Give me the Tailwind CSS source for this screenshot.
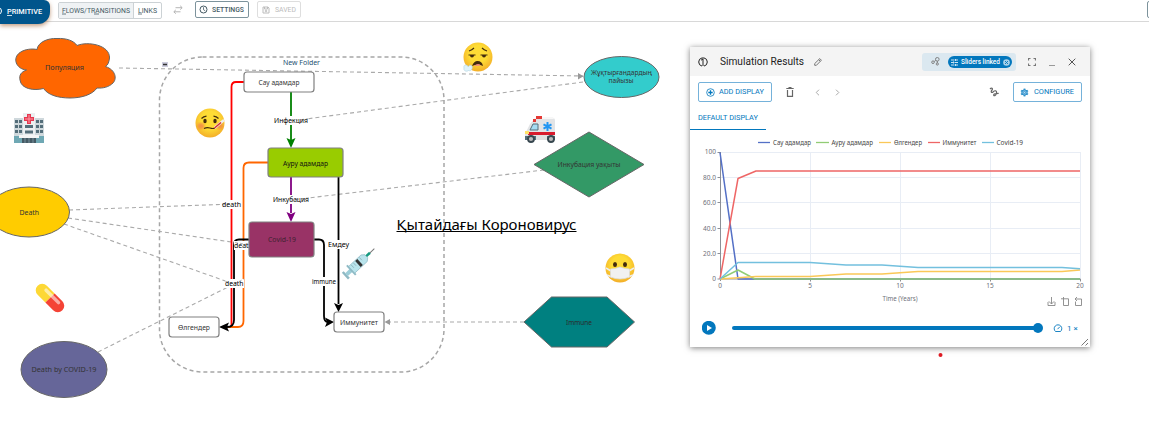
<!DOCTYPE html>
<html lang="kk">
<head>
<meta charset="utf-8">
<title>Simulation</title>
<script src="https://cdn.jsdelivr.net/npm/@tailwindcss/browser@4"></script>
</head>
<body class="bg-white">
<div class="relative flex h-[432px] w-[1149px] flex-col overflow-hidden bg-white font-['Roboto',sans-serif]">

<!-- Top toolbar -->
<header class="flex h-[22px] shrink-0 items-start border-b border-[#d8d8d8] bg-white text-[8px] leading-none">
  <button class="relative z-10 flex h-6 w-[50px] shrink-0 items-center rounded-br-[12px] rounded-tr-[6px] bg-[#00558c] pb-[3px] text-white shadow-[0_2px_4px_rgba(150,80,30,0.55)]">
    <svg class="-ml-1 mr-[5px] h-[9px] w-[7px] shrink-0" viewBox="0 0 7 9" fill="none" stroke="#fff" stroke-width="1"><circle cx="2.200" cy="5" r="3.300"/></svg>
    <svg class="h-3 w-9 shrink-0 overflow-visible"><text x="-1" y="9" font-size="7.800" font-weight="500" fill="#fff" textLength="35" lengthAdjust="spacingAndGlyphs">PRIMITIVE</text><path d="M-1 10.500H4" stroke="#fff" stroke-width=".8"/></svg>
  </button>
  <div class="ml-2 mt-[2px] flex h-[17px] shrink-0 overflow-hidden rounded-[2px] border border-[#ccd2d5]">
    <span class="flex w-[75px] items-start justify-center border-r border-[#ccd2d5] bg-[#eff2f4]"><svg class="h-4 w-[68px] overflow-visible"><text x="0" y="9.500" font-size="7.800" fill="#455a64" textLength="68" lengthAdjust="spacingAndGlyphs">FLOWS/TRANSITIONS</text><path d="M0 11H4M32 11H37" stroke="#455a64" stroke-width=".8"/></svg></span>
    <span class="flex w-[27px] items-start justify-center"><svg class="h-4 w-[19px] overflow-visible"><text x="0" y="9.500" font-size="7.800" fill="#455a64" textLength="19" lengthAdjust="spacingAndGlyphs">LINKS</text><path d="M0 11H4" stroke="#455a64" stroke-width=".8"/></svg></span>
  </div>
  <svg class="ml-[11px] mt-[5px] h-[10px] w-[10px] shrink-0" viewBox="0 0 10 10" fill="none" stroke="#b5b5b5" stroke-width="1"><path d="M2.500 2.700H9M7.200 .8L9.200 2.700 7.200 4.600M7.500 6.800H1M2.800 4.900L.8 6.800 2.800 8.700"/></svg>
  <button class="ml-[12px] mt-px flex h-[17px] w-[54px] shrink-0 items-start rounded-[2px] border border-[#7d939c] pl-[3px]">
    <svg class="mt-[3px] h-[9px] w-[9px]" viewBox="0 0 9 9" fill="none" stroke="#455a64"><circle cx="4.500" cy="4.500" r="3.500"/><path d="M4.500 2.200V4.700L6.200 5.800" stroke-width=".8"/></svg>
    <svg class="ml-[4px] h-4 w-8 overflow-visible"><text x="0" y="9.700" font-size="7.800" font-weight="500" fill="#455a64" textLength="32" lengthAdjust="spacingAndGlyphs">SETTINGS</text></svg>
  </button>
  <button class="ml-2 mt-px flex h-[17px] w-[44px] shrink-0 items-start rounded-[2px] border border-[#dedede] pl-[4px]">
    <svg class="mt-[4px] h-[8px] w-[8px]" viewBox="0 0 8 8" fill="none" stroke="#bcbcbc"><path d="M1 1H6L7 2V7H1ZM2.500 1V3H5.500V1"/><circle cx="4" cy="5" r=".8"/></svg>
    <svg class="ml-[4px] h-4 w-5 overflow-visible"><text x="1" y="9.500" font-size="7.800" fill="#bcbcbc" textLength="21" lengthAdjust="spacingAndGlyphs">SAVED</text></svg>
  </button>
  <button class="ml-auto mr-[-8px] mt-px h-[17px] w-[10px] shrink-0 rounded-[2px] border border-[#7d939c]"></button>
</header>

<!-- Model canvas -->
<svg class="absolute left-0 top-0 h-[432px] w-[1149px]" viewBox="0 0 1149 432" font-family="'Noto Sans',sans-serif" font-size="7" fill="none">
  <defs>
    <radialGradient id="face" cx=".5" cy=".4" r=".6"><stop offset=".5" stop-color="#fedc35"/><stop offset="1" stop-color="#f3ae29"/></radialGradient>
    <filter id="blush"><feGaussianBlur stdDeviation=".8"/></filter>
  </defs>
  <rect x="159.500" y="57" width="284.500" height="315" rx="43" stroke="#a6a6a6" stroke-width="1.500" stroke-dasharray="4 3"/>
  <g stroke="#aaa" stroke-width="1.100" stroke-dasharray="4 3">
    <path d="M119 68L583 76M583 82L291 121M544 170L291 200M69 210L232 204M68 218L245 244M64 224L234 284M98 352L234 284M524 322H386"/>
  </g>
  <path d="M578 73L583.500 76.200 578 79.500ZM390 319L384.500 322 390 325Z" fill="#999"/>
  <rect x="162" y="62" width="6" height="5" fill="#ccd"/><path d="M163 64.500H167" stroke="#333" stroke-width="1.500"/>

  <g stroke="#666" stroke-width="1">
    <path d="M37 49.500C38 42 48 38 57 38.500C67 38 74 41 77 45.500C88 41 110 45 109.500 58C109 62 108 65 105.500 66.500C116 70 117 79 113 83C109 87 103 88.500 97 88C92 95 81 98 70 98C58 98 48 95 43.500 88.500C34 91 21 89 20 80C19 75 21 72 26.500 70C16 69 12 58 20 52.500C25 49 32 48.500 37 49.500Z" fill="#ff6600"/>
    <ellipse cx="29" cy="212" rx="40.500" ry="25" fill="#ffcc00"/>
    <ellipse cx="64" cy="369.500" rx="43" ry="28" fill="#666699"/>
    <ellipse cx="621.500" cy="77" rx="37.500" ry="20.500" fill="#33cccc"/>
    <path d="M534 164.500L589 132 644 164.500 589 197Z" fill="#339966"/>
    <path d="M524 322L551.500 297H607L634.500 322 607 347H551.500Z" fill="#008080"/>
  </g>

  <g stroke-width="1.800">
    <path d="M244 82H236Q231.500 82 231.500 87V326" stroke="#f00"/>
    <path d="M268 162.500H249Q243.500 162.500 243.500 168V321Q243.500 327 238 327H228" stroke="#ff6600"/>
    <path d="M291 92V140" stroke="#008000"/><path d="M291 177V213" stroke="#800080"/>
    <path d="M338.500 177V304" stroke="#000"/>
    <path d="M249 239.500H239Q234 239.500 234 245V320Q234 327 227 327M314 239.500H319Q324 239.500 324 245V316Q324 322 328 322" stroke="#000"/>
  </g>
  <path d="M286.500 138L291 140 295.500 138 291 148Z" fill="#008000"/>
  <path d="M286.500 212L291 214 295.500 212 291 222Z" fill="#800080"/>
  <path d="M334 303L338.500 305 343 303 338.500 312Z" fill="#000"/>
  <path d="M229 322.500L227 327 229 331.500 219 327ZM325 317.500L327 322 325 327 334 322Z" fill="#000"/>

  <g stroke="#808080" stroke-width="1.200">
    <rect x="244" y="72" width="70" height="20" rx="3" fill="#fff"/>
    <rect x="268" y="148" width="75" height="29" rx="3" fill="#99cc00"/>
    <rect x="249" y="222" width="65" height="35" rx="3" fill="#993366"/>
    <rect x="169" y="317" width="50" height="20" rx="3" fill="#fff"/>
    <rect x="334" y="312" width="50" height="20" rx="3" fill="#fff"/>
  </g>
  <path d="M274 116H308V125H274ZM273 195H309V204H273ZM222 200H241V209H222ZM234 241H248V250H234ZM225 279H244V288H225ZM328 240H349V249H328ZM312 277H336V286H312Z" fill="#fff"/>
  <g stroke="#bbb" stroke-dasharray="3 2"><path d="M291 121L308 118.700M291 200L309 197.800M222 204.400L232 204M235 242.500L247 244.400M225 281L234 284 244 279"/></g>
  <g fill="#333">
    <text x="45" y="70" textLength="39" lengthAdjust="spacingAndGlyphs">Популяция</text>
    <text x="283" y="65" fill="#234f70" textLength="37" lengthAdjust="spacingAndGlyphs">New Folder</text>
    <text x="258.500" y="85" textLength="41" lengthAdjust="spacingAndGlyphs">Сау адамдар</text>
    <text x="283" y="165.500" fill="#111" textLength="45" lengthAdjust="spacingAndGlyphs">Ауру адамдар</text>
    <text x="268" y="242" fill="#3d2130" textLength="28" lengthAdjust="spacingAndGlyphs">Covid-19</text>
    <text x="178" y="330" textLength="32" lengthAdjust="spacingAndGlyphs">Өлгендер</text>
    <text x="340" y="325" textLength="38" lengthAdjust="spacingAndGlyphs">Иммунитет</text>
    <text x="19.500" y="215" textLength="19.500" lengthAdjust="spacingAndGlyphs">Death</text>
    <text x="31.500" y="372" textLength="65" lengthAdjust="spacingAndGlyphs">Death by COVID-19</text>
    <text x="591" y="75" textLength="61" lengthAdjust="spacingAndGlyphs">Жұқтырғандардың</text>
    <text x="608.500" y="83" textLength="25" lengthAdjust="spacingAndGlyphs">пайызы</text>
    <text x="557.500" y="167" textLength="63" lengthAdjust="spacingAndGlyphs">Инкубация уақыты</text>
    <text x="566" y="325" fill="#2a2a2a" textLength="26" lengthAdjust="spacingAndGlyphs">Immune</text>
  </g>
  <g fill="#000">
    <text x="274" y="123" textLength="34" lengthAdjust="spacingAndGlyphs">Инфекция</text>
    <text x="273" y="202" textLength="36" lengthAdjust="spacingAndGlyphs">Инкубация</text>
    <text x="222" y="207" textLength="19" lengthAdjust="spacingAndGlyphs">death</text>
    <text x="234" y="248" textLength="14.500" lengthAdjust="spacingAndGlyphs">deat</text>
    <text x="225" y="286" textLength="18.500" lengthAdjust="spacingAndGlyphs">death</text>
    <text x="328" y="247" textLength="21" lengthAdjust="spacingAndGlyphs">Емдеу</text>
    <text x="312" y="284" textLength="24" lengthAdjust="spacingAndGlyphs">immune</text>
    <text x="396.500" y="230" font-size="14.500" textLength="180" lengthAdjust="spacingAndGlyphs">Қытайдағы Короновирус</text>
    <path d="M396.500 231.500H576.500" stroke="#000"/>
  </g>

  <!-- Hospital -->
  <g transform="translate(14 113)">
    <path d="M0 5H30V30H0Z" fill="#cfd8dc"/><path d="M0 23H30V30H0Z" fill="#6fa8b4"/><path d="M9 0H21V24H9Z" fill="#eceff1"/>
    <path d="M1 7H4V10H1ZM5 7H8V10H5ZM22 7H25V10H22ZM26 7H29V10H26ZM1 12H4V15H1ZM5 12H8V15H5ZM22 12H25V15H22ZM26 12H29V15H26ZM1 17H4V20H1ZM5 17H8V20H5ZM22 17H25V20H22ZM26 17H29V20H26ZM11 12H19V15H11ZM11 17.500H19V20.500H11Z" fill="#546e7a"/>
    <path d="M5 22H25V25H5Z" fill="#f5f5f5"/><path d="M8 25H22V30H8Z" fill="#455a64"/><path d="M11 25V30M15 25V30M19 25V30" stroke="#78909c"/>
    <path d="M13 1H17V4H20V8H17V11H13V8H10V4H13Z" fill="#e53950"/><path d="M15 2V10M11 6H19" stroke="#ff9aa5"/>
  </g>
  <!-- Pill -->
  <g transform="translate(50 298) rotate(45)"><path d="M0 -6.500H-11A6.500 6.500 0 0 0 -11 6.500H0Z" fill="#fdd835"/><path d="M0 -6.500H11A6.500 6.500 0 0 1 11 6.500H0Z" fill="#f44336"/><rect x="-10" y="-4.500" width="21" height="3.500" rx="1.700" fill="#fff" opacity=".55"/></g>
  <!-- Feverish face -->
  <g transform="translate(210 123)">
    <circle r="14.500" fill="url(#face)"/><ellipse cx="-9" cy="3" rx="3.500" ry="3" fill="#f07a4b" opacity=".7" filter="url(#blush)"/><ellipse cx="10" cy="3" rx="3" ry="3" fill="#f07a4b" opacity=".7" filter="url(#blush)"/>
    <ellipse cx="-5" cy="-2" rx="1.700" ry="2.300" fill="#422b0d"/><ellipse cx="5" cy="-2" rx="1.700" ry="2.300" fill="#422b0d"/>
    <path d="M-8.500 -4.500Q-6.500 -6.500 -3.500 -6.800M3.500 -6.800Q6.500 -6.500 8.500 -4.500M-6 5.500Q-3 4 0 5T5 5" stroke="#422b0d" stroke-width="1.200"/>
    <path d="M4.500 5L14 -3" stroke="#eee" stroke-width="2.500"/><path d="M4.500 5L11 -.5" stroke="#d32f2f" stroke-width="1.500"/>
  </g>
  <!-- Exhaling face -->
  <g transform="translate(478 57)">
    <circle r="14.500" fill="url(#face)"/><path d="M-9 -6Q-6 -7 -4 -9M4 -9Q6 -7 9 -6" stroke="#422b0d" stroke-width="1.200"/>
    <path d="M-9.500 -2H-2.500M2.500 -2H9.500" stroke="#422b0d" stroke-width="1.200"/><path d="M-8 -2A2 2.500 0 0 0 -4 -2ZM4 -2A2 2.500 0 0 0 8 -2Z" fill="#422b0d"/>
    <path d="M-6 9Q-4 4 -.5 4Q4 4 5 9Q0 6.500 -6 9Z" fill="#422b0d"/><path d="M-4 9Q0 5.500 3 8.500Z" fill="#ef8a80"/>
    <path d="M-6 9C-8 7 -10 9 -9.500 10C-11 7 -15 7.500 -14 11C-15 14 -11 15 -9.500 13.500C-7 14.500 -5 12 -6 9Z" fill="#e0f3fa" stroke="#acd3e1" stroke-width=".6"/>
  </g>
  <!-- Masked face -->
  <g transform="translate(620 268)">
    <circle r="14.500" fill="url(#face)"/><ellipse cx="-5" cy="-3.500" rx="2" ry="2.500" fill="#422b0d"/><ellipse cx="5" cy="-3.500" rx="2" ry="2.500" fill="#422b0d"/>
    <path d="M-14 0L-9 3M14 0L9 3M-13 7L-8 9M13 7L8 9" stroke="#eee" stroke-width="1.500"/><path d="M-9.500 1Q-5 1 0 -1Q5 1 9.500 1V9Q5 11 0 11Q-5 11 -9.500 9Z" fill="#f1f1f1" stroke="#dadada" stroke-width=".7"/>
  </g>
  <!-- Ambulance -->
  <g transform="translate(524 116)">
    <path d="M1 18L6 8 11 2H29Q31 2 31 5V23H1Z" fill="#e2e4e6"/><path d="M9 4L12 1H29L30 3H11Z" fill="#f7f7f7"/>
    <path d="M12 0H18V3H12ZM9 3H12V6H9Z" fill="#e53935"/><path d="M6 14L9 8H14V14Z" fill="#a5dcf2" stroke="#546e7a"/>
    <path d="M4 16H31V19H4Z" fill="#d81b2c"/><path d="M1 20H31V24H1Z" fill="#546e7a"/><path d="M12 19H23V24H12Z" fill="#e0e0e0"/><path d="M1 15H5V18H1Z" fill="#ffe36a"/>
    <path d="M23.500 6V15M19.500 8.300L27.500 12.700M27.500 8.300L19.500 12.700" stroke="#2196f3" stroke-width="2"/>
    <circle cx="7" cy="23" r="3" fill="#bbb" stroke="#37474f" stroke-width="1.800"/><circle cx="27" cy="23" r="3" fill="#bbb" stroke="#37474f" stroke-width="1.800"/>
  </g>
  <!-- Syringe -->
  <g transform="translate(359 263) rotate(-43)">
    <path d="M-18 -4.500V4.500" stroke="#8fb9c4" stroke-width="2.500"/><path d="M-17 0H-10" stroke="#9ccdd8" stroke-width="4"/><path d="M-10.500 -6.500V6.500" stroke="#8fbac5" stroke-width="2"/>
    <path d="M-10 -4.500H7L10 -2V2L7 4.500H-10Z" fill="#b9e4ec" stroke="#8bb8c4" stroke-width=".7"/><path d="M0 -4V4" stroke="#333" stroke-width="3"/><path d="M-7 -4V0M-4 -4V0M4 -4V0" stroke="#83a7b0" stroke-width=".7"/>
    <path d="M10 0H15" stroke="#159a80" stroke-width="2.500"/><path d="M15 0H21" stroke="#777"/>
  </g>
  <circle cx="940.500" cy="355" r="2" fill="#e01b24"/>
</svg>

<!-- Floating results window -->
<section class="absolute left-[690px] top-[47px] flex h-[300px] w-[400px] flex-col bg-white shadow-[0_1px_6px_rgba(0,0,0,0.5)]">
  <div class="flex h-[29px] shrink-0 items-center bg-[#f4f4f4] pl-[8px]">
    <svg class="h-[10px] w-[10px]" viewBox="0 0 10 10" fill="none" stroke="#222" stroke-width="1"><path d="M4 .9A4.200 4.200 0 0 0 4 9.100M6 .9A4.200 4.200 0 0 1 6 9.100M3 3.200L5 2V9M4 1H6"/></svg>
    <svg class="ml-3 h-4 w-[84px] overflow-visible"><text x="0" y="11" font-size="10" fill="#222" textLength="84" lengthAdjust="spacingAndGlyphs">Simulation Results</text></svg>
    <svg class="ml-[10px] h-2 w-2" viewBox="0 0 8 8" fill="none" stroke="#777"><path d="M.7 7.300V5.600L5.800 .6 7.400 2.200 2.400 7.300ZM4.700 1.700L6.300 3.300"/></svg>
    <div class="ml-[100px] flex h-[18px] w-[94px] items-center rounded-[3px] bg-[#dbe8f0] pl-[9px]">
      <svg class="h-[9px] w-[9px]" viewBox="0 0 9 9" fill="none" stroke="#777" stroke-width=".9"><circle cx="2" cy="5.200" r="1.300"/><circle cx="6.300" cy="2.300" r="1.800"/><circle cx="6.300" cy="7" r="1.100"/><path d="M3.200 4.500L4.800 3.400M6.300 4V6"/></svg>
      <div class="ml-[8px] mt-px flex h-3 w-16 items-center rounded-full bg-[#0277bd] pl-[3px]">
        <svg class="h-[7px] w-[7px]" viewBox="0 0 7 7" stroke="#fff" stroke-width=".8"><path d="M0 1H3.500M5 1H7M4.500 0V2M0 3.500H2M3.500 3.500H7M2.500 2.500V4.500M0 6H3.500M5 6H7M4.500 5V7"/></svg>
        <svg class="ml-[3px] h-3 w-10 shrink-0 overflow-visible"><text x="0" y="8" font-size="7" font-weight="500" fill="#fff" textLength="39" lengthAdjust="spacingAndGlyphs">Sliders linked</text></svg>
        <svg class="ml-[2px] h-[7px] w-[7px] shrink-0" viewBox="0 0 7 7"><circle cx="3.500" cy="3.500" r="3.300" fill="#a9d1e9"/><path d="M2 2L5 5M5 2L2 5" stroke="#0277bd" stroke-width=".9"/></svg>
      </div>
    </div>
    <svg class="ml-[12px] h-2 w-2" viewBox="0 0 8 8" fill="none" stroke="#777" stroke-width="1.200"><path d="M.5 2.500V.5H2.500M5.500 .5H7.500V2.500M7.500 5.500V7.500H5.500M2.500 7.500H.5V5.500"/></svg>
    <span class="ml-[13px] mt-2 h-[1.5px] w-[6px] bg-[#999]"></span>
    <svg class="ml-[13px] h-[8px] w-[8px]" viewBox="0 0 8 8" stroke="#555"><path d="M.7 .7L7.300 7.300M7.300 .7L.7 7.300"/></svg>
  </div>
  <div class="flex h-8 shrink-0 items-center px-2">
    <button class="flex h-5 w-[74px] items-center rounded-[2px] border border-[#75b2da] pl-[7px]">
      <svg class="h-[9px] w-[9px]" viewBox="0 0 9 9" fill="none" stroke="#0277bd"><circle cx="4.500" cy="4.500" r="3.800" stroke-width=".8"/><path d="M4.500 2.300V6.700M2.300 4.500H6.700" stroke-width="1.300"/></svg>
      <svg class="ml-1 h-3 w-[45px] overflow-visible"><text x="0" y="8.200" font-size="7" fill="#0277bd" textLength="45" lengthAdjust="spacingAndGlyphs">ADD DISPLAY</text></svg>
    </button>
    <svg class="ml-[14px] h-[10px] w-2" viewBox="0 0 8 10" fill="none" stroke="#666"><path d="M.3 1.500H7.700M2.500 .7H5.500M1.500 3V9.300H6.500V3" stroke-width="1.200"/></svg>
    <svg class="ml-[21px] h-[7px] w-[5px]" viewBox="0 0 5 7" fill="none" stroke="#aaa"><path d="M4 .7L1.200 3.500 4 6.300"/></svg>
    <svg class="ml-[15px] h-[7px] w-[5px]" viewBox="0 0 5 7" fill="none" stroke="#aaa"><path d="M1 .7L3.800 3.500 1 6.300"/></svg>
    <svg class="ml-auto mr-[14px] h-[10px] w-[10px]" viewBox="0 0 10 10" fill="none" stroke="#666" stroke-width="1.200"><path d="M1 2C2.500 .3 4.300 1.500 3 3C1.500 4.700 2.500 6.200 4 5C6 3 8 3.500 7.500 6C7 8.800 4.500 9.500 4.700 7.800C5 6.300 7.500 6.300 9.700 6.300"/></svg>
    <button class="flex h-5 w-[69px] items-center rounded-[2px] border border-[#75b2da] pl-[6px]">
      <svg class="h-[9px] w-[9px]" viewBox="0 0 9 9" fill="none" stroke="#0277bd"><path d="M4.500 .5V8.500M1 2.500L8 6.500M8 2.500L1 6.500" stroke-width="1.800" opacity=".7"/><circle cx="4.500" cy="4.500" r="2.700" fill="#8cc3e6" stroke-width=".8"/><circle cx="4.500" cy="4.500" r="1.100" fill="#b8dbf0" stroke-width=".5"/></svg>
      <svg class="ml-[5px] h-3 w-10 overflow-visible"><text x="0" y="8.200" font-size="7" fill="#0277bd" textLength="40" lengthAdjust="spacingAndGlyphs">CONFIGURE</text></svg>
    </button>
  </div>
  <div class="flex h-[22px] shrink-0">
    <div class="flex w-[76px] items-start border-b border-[#0277bd] pl-2 pt-[3px]"><svg class="h-3 w-[60px] overflow-visible"><text x="0" y="9" font-size="7" fill="#0277bd" textLength="60" lengthAdjust="spacingAndGlyphs">DEFAULT DISPLAY</text></svg></div>
  </div>
  <!-- Chart -->
  <svg class="h-[183px] w-[400px] shrink-0" viewBox="690 130 400 183" fill="none" font-family="'Noto Sans',sans-serif" font-size="6.500">
    <g stroke-width="1.300"><path d="M758 142.500H770" stroke="#5470c6"/><path d="M816 142.500H829" stroke="#91cc75"/><path d="M879 142.500H891" stroke="#fac858"/><path d="M928 142.500H940" stroke="#ee6666"/><path d="M982 142.500H994" stroke="#73c0de"/></g>
    <g fill="#444">
      <text x="773" y="144.500" textLength="38" lengthAdjust="spacingAndGlyphs">Сау адамдар</text><text x="831.500" y="144.500" textLength="41.500" lengthAdjust="spacingAndGlyphs">Ауру адамдар</text><text x="894" y="144.500" textLength="28" lengthAdjust="spacingAndGlyphs">Өлгендер</text><text x="942.500" y="144.500" textLength="34" lengthAdjust="spacingAndGlyphs">Иммунитет</text><text x="996.500" y="144.500" textLength="26.500" lengthAdjust="spacingAndGlyphs">Covid-19</text>
    </g>
    <path d="M720 152.500H1080.500M720 177.500H1080.500M720 202.500H1080.500M720 228.500H1080.500M720 253.500H1080.500M810.500 152V279M900.500 152V279M990.500 152V279M1080.500 152V279" stroke="#e8edf5"/>
    <path d="M720.500 152V281M717.500 152.500H720M717.500 177.500H720M717.500 202.500H720M717.500 228.500H720M717.500 253.500H720M717.500 279H1080.500M810.500 279V281.500M900.500 279V281.500M990.500 279V281.500M1080.500 279V281.500" stroke="#8c8f96"/>
    <g fill="#6e7079" text-anchor="end"><text x="716" y="154">100</text><text x="716" y="179.500">80.0</text><text x="716" y="204.500">60.0</text><text x="716" y="230.500">40.0</text><text x="716" y="255.500">20.0</text><text x="716" y="281">0</text></g>
    <g fill="#6e7079" text-anchor="middle"><text x="720" y="287.500">0</text><text x="810" y="287.500">5</text><text x="900" y="287.500">10</text><text x="990" y="287.500">15</text><text x="1080" y="287.500">20</text></g>
    <text x="882.500" y="301" fill="#6e7079" textLength="35" lengthAdjust="spacingAndGlyphs">Time (Years)</text>
    <g stroke-width="1.500" stroke-linejoin="bevel">
      <path d="M720 152.500L738 279H1080" stroke="#5470c6"/>
      <path d="M720 279L738 270 755 279H1080" stroke="#91cc75"/>
      <path d="M720 279L756 276.500H810L846 274H882L918 271.500H1062L1080 270" stroke="#fac858"/>
      <path d="M720 279L738 178.500 756 171H1080" stroke="#ee6666"/>
      <path d="M720 279L738 262.500H810L846 265H882L918 267.500H1062L1080 268.800" stroke="#73c0de"/>
    </g>
    <g stroke="#888" stroke-width=".9"><path d="M1048 302V305.500H1055V302M1051.500 297V304M1048.800 301.300L1051.500 304 1054.200 301.300M1061 298.800H1068.500V303M1068.500 305.500H1063.500V297M1068.500 303V305.500M1075.500 301.500V305.500H1081.500V299H1075M1077 297L1075 299 1077 301"/></g>
  </svg>
  <div class="relative flex flex-1 items-start pl-3 pt-[8px]">
    <svg class="h-[14px] w-[14px]" viewBox="0 0 14 14" fill="#0277bd"><circle cx="6.800" cy="6.800" r="7"/><path d="M5 4L10 7 5 10Z" fill="#fff"/></svg>
    <svg class="ml-4 h-[14px] w-[311px] overflow-visible" viewBox="0 0 311 14"><path d="M2 7H306" stroke="#0277bd" stroke-width="4" stroke-linecap="round"/><circle cx="306" cy="7" r="5" fill="#0277bd"/></svg>
    <svg class="ml-[11px] mt-[3px] h-2 w-2 overflow-visible" viewBox="0 0 8 8" fill="none" stroke="#0277bd" stroke-width=".9"><path d="M1.500 7.500A3.800 3.800 0 1 1 6.500 7.500ZM3.500 5.200L5.800 2.800"/></svg>
    <svg class="ml-[6px] h-3 w-3 overflow-visible"><text x="-1" y="9.500" font-size="8" fill="#0277bd">1 ×</text></svg>
    <svg class="absolute bottom-[1px] right-[1px] h-2 w-2" viewBox="0 0 8 8" stroke="#555" stroke-width=".8"><path d="M.5 7.500L7 1M4.500 7.500L7 5"/></svg>
  </div>
</section>
</div>
</body>
</html>
